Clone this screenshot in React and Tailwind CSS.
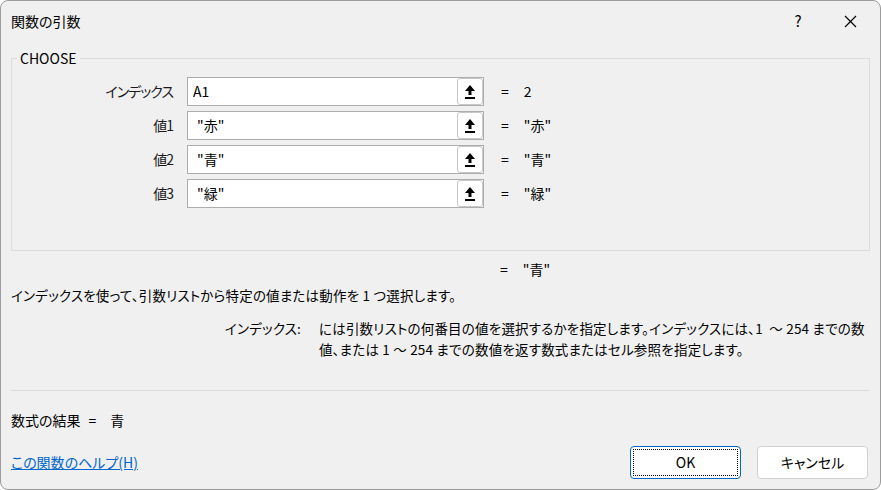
import React from "react";

const rows = [
  { label: "インデックス", value: "A1", result: "2", quoted: false },
  { label: "値1", value: "\"赤\"", result: "\"赤\"", quoted: true },
  { label: "値2", value: "\"青\"", result: "\"青\"", quoted: true },
  { label: "値3", value: "\"緑\"", result: "\"緑\"", quoted: true },
];

function RefIcon() {
  return (
    <svg width="12" height="16" viewBox="0 0 12 16">
      <path d="M6 1 L11 7 L7.5 7 L7.5 11 L4.5 11 L4.5 7 L1 7 Z" fill="#000" />
      <rect x="1" y="13" width="10" height="2" fill="#000" />
    </svg>
  );
}

function ArgRow({ row }) {
  return (
    <div className="flex items-center h-[29px]">
      <div className="w-[161px] text-right text-[14px] tracking-[-1px] text-[#1a1a1a]">{row.label}</div>
      <div className="ml-[14px] w-[297px] h-[29px] bg-white border border-[#adadad] flex items-center">
        <span className={row.quoted ? "pl-[9px] text-[14px] flex-1" : "pl-[5px] text-[14px] flex-1"}>{row.value}</span>
        <button className="w-[26px] h-[27px] border border-[#c8c8c8] rounded-[3px] bg-white flex items-center justify-center">
          <RefIcon />
        </button>
      </div>
      <span className="ml-[17px] text-[14px]">=</span>
      <span className="ml-[15px] text-[14px]">{row.result}</span>
    </div>
  );
}

export default function App() {
  return (
    <div className="w-[881px] h-[490px] bg-[#f0f0f0] border border-[#9c9c9c] rounded-lg overflow-hidden text-[#000] font-['Noto_Sans_CJK_JP','Noto_Sans',sans-serif] [font-feature-settings:'palt'] flex flex-col">
      {/* title bar */}
      <div className="h-[40px] flex items-center pl-[10px] pr-[20px]">
        <span className="text-[14px] flex-1">関数の引数</span>
        <span className="text-[15px] w-[20px] text-center mr-[36px]">?</span>
        <svg width="13" height="13" viewBox="0 0 13 13" className="mr-[3px]">
          <path d="M1 1 L12 12 M12 1 L1 12" stroke="#000" strokeWidth="1.2" />
        </svg>
      </div>

      <fieldset className="mx-[10px] mt-[8px] h-[202px] border border-[#dcdcdc] pl-0">
        <legend className="ml-[5px] px-[3px] text-[14px] leading-[18px]">CHOOSE</legend>
        <div className="mt-[10px] flex flex-col gap-[5px]">
          {rows.map((r) => (
            <ArgRow key={r.label} row={r} />
          ))}
        </div>
      </fieldset>

      <div className="mt-[8px] h-[20px] flex items-center pl-[499px] text-[14px]">
        <span>=</span>
        <span className="ml-[15px]">"青"</span>
      </div>

      <div className="mt-[6px] pl-[10px] text-[13.5px] tracking-[0.2px] leading-[20px]">
        インデックスを使って、引数リストから特定の値または動作を 1 つ選択します。
      </div>

      <div className="mt-[13px] flex text-[13.5px] tracking-[0.2px] leading-[21px]">
        <div className="w-[300px] text-right">インデックス:</div>
        <div className="ml-[18px]">
          には引数リストの何番目の値を選択するかを指定します。インデックスには、1 &nbsp;～ 254 までの数
          <br />
          値、または 1 ～ 254 までの数値を返す数式またはセル参照を指定します。
        </div>
      </div>

      <div className="mt-[30px] mx-[10px] border-t border-[#dcdcdc]" />

      <div className="mt-[19px] pl-[10px] text-[14px] leading-[20px] flex">
        <span>数式の結果</span>
        <span className="ml-[8px]">=</span>
        <span className="ml-[14px]">青</span>
      </div>

      <div className="mt-[16px] flex items-center pl-[10px] pr-[12px]">
        <a href="#" className="text-[14px] text-[#0066cc] underline flex-1">この関数のヘルプ(H)</a>
        <button className="w-[111px] h-[33px] rounded-[4px] border border-[#0067c0] bg-white p-[2px]">
          <div className="w-full h-full border border-dotted border-black flex items-center justify-center text-[14px]">OK</div>
        </button>
        <button className="ml-[16px] w-[111px] h-[33px] rounded-[4px] border border-[#d0d0d0] bg-white text-[14px]">
          キャンセル
        </button>
      </div>
    </div>
  );
}
